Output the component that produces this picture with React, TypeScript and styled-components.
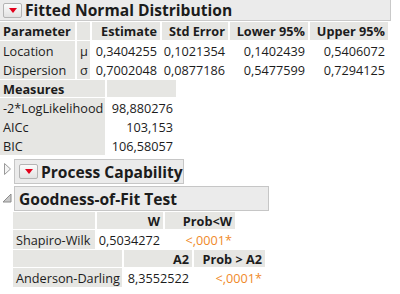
import React from "react";
import styled, { createGlobalStyle } from "styled-components";

const Global = createGlobalStyle`
  html, body { margin: 0; padding: 0; background: #ffffff; }
  body { font-family: "Open Sans", "Noto Sans", sans-serif; color: #1c1c1c; }
`;

const Page = styled.div`
  width: 400px;
  height: 294px;
  overflow: hidden;
  display: flex;
  flex-direction: column;
`;

const TitleBar = styled.div`
  width: 391px;
  height: 21px;
  box-sizing: border-box;
  background: #ebebeb;
  border-right: 1px solid #c9c9c9;
  border-bottom: 1px solid #c9c9c9;
  display: flex;
  align-items: center;
  gap: 3px;
  padding-left: 3px;
`;

const RedButton = styled.div`
  width: 19px;
  height: 15px;
  box-sizing: border-box;
  border: 1px solid #b4b4b4;
  border-radius: 2px;
  background: linear-gradient(#fbfbfb, #e2e2e2);
  display: flex;
  align-items: center;
  justify-content: center;
  flex-shrink: 0;
  &::after {
    content: "";
    width: 0;
    height: 0;
    border-left: 4px solid transparent;
    border-right: 4px solid transparent;
    border-top: 5px solid #e3001b;
  }
`;

const Title = styled.span`
  font-weight: 700;
  font-size: 15.6px;
  line-height: 20px;
  white-space: nowrap;
`;

const Table = styled.div<{ $cols: string; $head: number; $mt?: number; $ml?: number }>`
  display: grid;
  grid-template-columns: ${(p) => p.$cols};
  grid-template-rows: ${(p) => p.$head + 1}px;
  grid-auto-rows: 19px;
  column-gap: 2px;
  margin-top: ${(p) => p.$mt ?? 0}px;
  margin-left: ${(p) => p.$ml ?? 0}px;
  font-size: 12.7px;
  width: max-content;
`;

const Cell = styled.div<{
  $kind?: "head" | "label" | "plain";
  $align?: "left" | "right";
  $color?: string;
}>`
  display: flex;
  align-items: center;
  justify-content: ${(p) => (p.$align === "right" ? "flex-end" : "flex-start")};
  padding: 0 3px;
  white-space: nowrap;
  background: ${(p) =>
    p.$kind === "head" || p.$kind === "label" ? "#e6e6e3" : "transparent"};
  font-weight: ${(p) => (p.$kind === "head" ? 700 : 400)};
  color: ${(p) => p.$color ?? "inherit"};
`;

const HeadCell = styled(Cell).attrs({ $kind: "head" as const })`
  margin-bottom: 1px;
`;

const OutlineRow = styled.div<{ $mt: number }>`
  display: flex;
  align-items: flex-start;
  margin-top: ${(p) => p.$mt}px;
`;

const Toggle = styled.div<{ $pt: number }>`
  width: 14px;
  flex-shrink: 0;
  display: flex;
  justify-content: center;
  padding-top: ${(p) => p.$pt}px;
`;

const Box = styled.div<{ $w: number }>`
  width: ${(p) => p.$w}px;
  height: 25px;
  box-sizing: border-box;
  border: 1px solid #c6c6c6;
  background: #ebebeb;
  display: flex;
  align-items: center;
  gap: 3px;
  padding-left: 4px;
`;

const Orange = "#f08a2a";

export default function App() {
  return (
    <Page>
      <Global />
      <TitleBar>
        <RedButton />
        <Title>Fitted Normal Distribution</Title>
      </TitleBar>

      <Table $cols="75px 13px 68px 66px 78px 78px" $head={18} $mt={1}>
        <HeadCell>Parameter</HeadCell>
        <HeadCell />
        <HeadCell $align="right">Estimate</HeadCell>
        <HeadCell $align="right">Std Error</HeadCell>
        <HeadCell $align="right">Lower 95%</HeadCell>
        <HeadCell $align="right">Upper 95%</HeadCell>

        <Cell $kind="label">Location</Cell>
        <Cell $kind="label">μ</Cell>
        <Cell $align="right">0,3404255</Cell>
        <Cell $align="right">0,1021354</Cell>
        <Cell $align="right">0,1402439</Cell>
        <Cell $align="right">0,5406072</Cell>

        <Cell $kind="label">Dispersion</Cell>
        <Cell $kind="label">σ</Cell>
        <Cell $align="right">0,7002048</Cell>
        <Cell $align="right">0,0877186</Cell>
        <Cell $align="right">0,5477599</Cell>
        <Cell $align="right">0,7294125</Cell>
      </Table>

      <Table $cols="105px 69px" $head={17} $mt={1}>
        <HeadCell>Measures</HeadCell>
        <HeadCell />
        <Cell $kind="label">-2*LogLikelihood</Cell>
        <Cell $align="right">98,880276</Cell>
        <Cell $kind="label">AICc</Cell>
        <Cell $align="right">103,153</Cell>
        <Cell $kind="label">BIC</Cell>
        <Cell $align="right">106,58057</Cell>
      </Table>

      <OutlineRow $mt={4}>
        <Toggle $pt={3}>
          <svg width="9" height="14" viewBox="0 0 9 14">
            <path d="M1.5 1.5 L7.5 7 L1.5 12.5 Z" fill="#f4f4f4" stroke="#9a9a9a" strokeWidth="1" />
          </svg>
        </Toggle>
        <Box $w={170}>
          <RedButton />
          <Title>Process Capability</Title>
        </Box>
      </OutlineRow>

      <OutlineRow $mt={2}>
        <Toggle $pt={7}>
          <svg width="10" height="10" viewBox="0 0 10 10">
            <path d="M9 1 L9 9 L1 9 Z" fill="#c8c8c8" stroke="#8c8c8c" strokeWidth="1" />
          </svg>
        </Toggle>
        <Box $w={255}>
          <Title>Goodness-of-Fit Test</Title>
        </Box>
      </OutlineRow>

      <Table $cols="82px 66px 70px" $head={17} $mt={1} $ml={13}>
        <HeadCell />
        <HeadCell $align="right">W</HeadCell>
        <HeadCell $align="right">Prob&lt;W</HeadCell>
        <Cell $kind="label">Shapiro-Wilk</Cell>
        <Cell $align="right">0,5034272</Cell>
        <Cell $align="right" $color={Orange}>&lt;,0001*</Cell>
      </Table>

      <Table $cols="109px 68px 71px" $head={17} $mt={1} $ml={13}>
        <HeadCell />
        <HeadCell $align="right">A2</HeadCell>
        <HeadCell $align="right">Prob &gt; A2</HeadCell>
        <Cell $kind="label">Anderson-Darling</Cell>
        <Cell $align="right">8,3552522</Cell>
        <Cell $align="right" $color={Orange}>&lt;,0001*</Cell>
      </Table>
    </Page>
  );
}
